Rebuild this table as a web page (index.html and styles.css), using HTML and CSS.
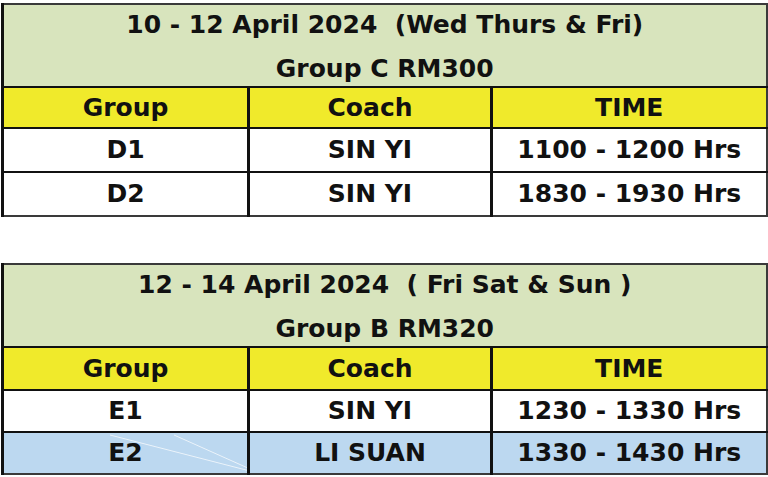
FILE: index.html
```html
<!DOCTYPE html>
<html>
<head>
<meta charset="utf-8">
<link rel="stylesheet" href="styles.css">
</head>
<body>
<div class="page">
  <table class="sched">
    <colgroup><col class="c1"><col class="c2"><col class="c3"></colgroup>
    <tr class="title"><td colspan="3"><div class="line1">10 - 12 April 2024&nbsp; (Wed Thurs &amp; Fri)</div><div class="line2">Group C RM300</div></td></tr>
    <tr class="head"><td>Group</td><td>Coach</td><td>TIME</td></tr>
    <tr class="row r1"><td>D1</td><td>SIN YI</td><td>1100 - 1200 Hrs</td></tr>
    <tr class="row r2"><td>D2</td><td>SIN YI</td><td>1830 - 1930 Hrs</td></tr>
  </table>

  <table class="sched second">
    <colgroup><col class="c1"><col class="c2"><col class="c3"></colgroup>
    <tr class="title"><td colspan="3"><div class="line1">12 - 14 April 2024&nbsp; ( Fri Sat &amp; Sun )</div><div class="line2">Group B RM320</div></td></tr>
    <tr class="head"><td>Group</td><td>Coach</td><td>TIME</td></tr>
    <tr class="row r1"><td>E1</td><td>SIN YI</td><td>1230 - 1330 Hrs</td></tr>
    <tr class="row r2 blue"><td class="glare">E2<svg class="streak" width="246" height="42" viewBox="0 0 246 42"><line x1="106" y1="2" x2="246" y2="38" /><line x1="170" y1="2" x2="246" y2="36" /></svg></td><td>LI SUAN</td><td>1330 - 1430 Hrs</td></tr>
  </table>
</div>
</body>
</html>
```

FILE: styles.css
```css
html, body {
  margin: 0;
  padding: 0;
  background: #ffffff;
}

.page {
  display: flex;
  flex-direction: column;
  gap: 46px;
  padding: 3px 3px 0 1px;
  width: 764px;
}

.sched {
  width: 764px;
  border-collapse: collapse;
  table-layout: fixed;
  border: 2px solid #3a3a3a;
  font-family: "DejaVu Sans", "Liberation Sans", sans-serif;
  font-weight: bold;
  font-size: 25px;
  color: #111111;
}

.c1 { width: 246px; }
.c2 { width: 243px; }
.c3 { width: 275px; }

.sched td {
  text-align: center;
  padding: 0;
  border-left: 3px solid #111111;
  border-top: 2px solid #111111;
  line-height: 28px;
}

.title td {
  background: #d8e4bd;
  height: 81px;
  border-top: none;
}

.line1 {
  height: 44px;
  line-height: 40px;
}

.line2 {
  height: 37px;
  padding-top: 5px;
  line-height: 30px;
  box-sizing: border-box;
}

.head td {
  background: #f0ea2b;
  height: 39px;
}

.second .head td {
  height: 41px;
}

.row td {
  background: #ffffff;
  height: 42px;
}

.second .row td {
  height: 40px;
}

.row.blue td {
  background: #bcd8f0;
}

.glare {
  position: relative;
  overflow: hidden;
}

.streak {
  position: absolute;
  left: 0;
  top: 0;
}

.streak line {
  stroke: #ffffff;
  stroke-width: 1;
  opacity: 0.7;
}
```
